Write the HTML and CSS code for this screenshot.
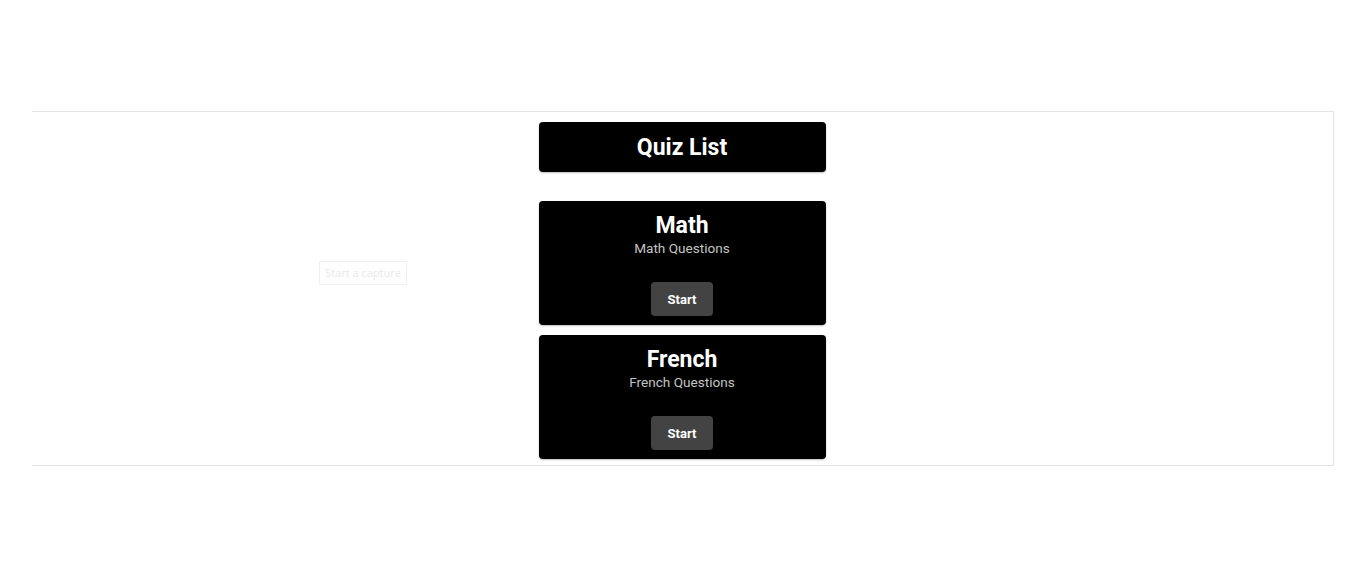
FILE: index.html
```html
<!DOCTYPE html>
<html lang="en">
<head>
<meta charset="utf-8">
<title>Quiz List</title>
<link rel="stylesheet" href="styles.css">
</head>
<body>
<div class="page">
  <div class="frame">
    <div class="capture">Start a capture</div>
    <div class="column">
      <div class="header-card"><h1 class="header-title">Quiz List</h1></div>
      <div class="quiz-list">
        <div class="quiz-card">
          <h2 class="quiz-title">Math</h2>
          <p class="quiz-desc">Math Questions</p>
          <button class="start-btn">Start</button>
        </div>
        <div class="quiz-card">
          <h2 class="quiz-title">French</h2>
          <p class="quiz-desc">French Questions</p>
          <button class="start-btn">Start</button>
        </div>
      </div>
    </div>
  </div>
</div>
</body>
</html>
```

FILE: styles.css
```css
* { box-sizing: border-box; }
html, body { margin: 0; padding: 0; background: #fff; }
body { font-family: Roboto, "Noto Sans", Arial, sans-serif; color: #fff; }

.page { padding: 111px 31px 0 32px; }

.frame {
  position: relative;
  border-top: 1px solid #e3e3e3;
  border-right: 1px solid #e3e3e3;
  border-bottom: 1px solid #e3e3e3;
  padding: 10px 0 6px;
  display: flex;
  justify-content: center;
}

.capture {
  position: absolute;
  left: 287px;
  top: 149px;
  width: 88px;
  height: 24px;
  border: 1px solid #f0f0f0;
  color: #e8e8e8;
  font-size: 11px;
  line-height: 22px;
  text-align: center;
  font-family: "Open Sans", Roboto, sans-serif;
}

.column { width: 287px; margin-left: -1px; }

.header-card {
  background: #000;
  border-radius: 4px;
  height: 50px;
  padding-top: 1px;
  display: flex;
  align-items: center;
  justify-content: center;
  box-shadow: 0 1px 2px rgba(0,0,0,0.25);
}
.header-title { margin: 0; font-size: 23px; font-weight: 700; line-height: 28px; }

.quiz-list { margin-top: 29px; display: flex; flex-direction: column; gap: 10px; }

.quiz-card {
  background: #000;
  border-radius: 4px;
  padding: 12px 0 9px;
  display: flex;
  flex-direction: column;
  align-items: center;
  box-shadow: 0 1px 2px rgba(0,0,0,0.25);
}
.quiz-title { margin: 0; font-size: 23px; font-weight: 700; line-height: 26px; }
.quiz-desc { margin: 0; font-size: 13.6px; line-height: 19px; color: #c4c4c4; }
.start-btn {
  margin-top: 24px;
  width: 62px;
  height: 34px;
  border: none;
  border-radius: 4px;
  background: #434343;
  color: #fff;
  font-family: Roboto, sans-serif;
  font-size: 13px;
  font-weight: 700;
  padding: 0;
}
```
